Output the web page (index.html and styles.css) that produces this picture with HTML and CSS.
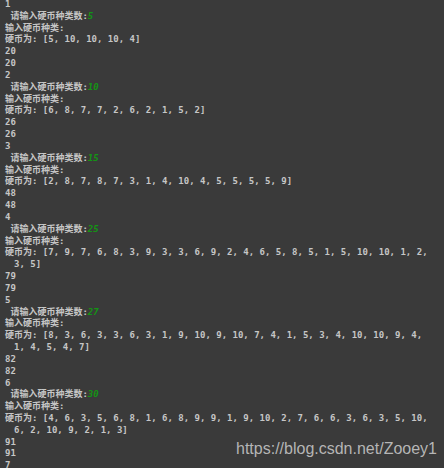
FILE: index.html
```html
<!DOCTYPE html>
<html lang="zh">
<head>
<meta charset="utf-8">
<title>Console</title>
<link rel="stylesheet" href="styles.css">
</head>
<body>
<div class="console">
<div class="line">1</div>
<div class="line"> 请输入硬币种类数:<span class="in">5</span></div>
<div class="line">输入硬币种类:</div>
<div class="line">硬币为: [5, 10, 10, 10, 4]</div>
<div class="line">20</div>
<div class="line">20</div>
<div class="line">2</div>
<div class="line"> 请输入硬币种类数:<span class="in">10</span></div>
<div class="line">输入硬币种类:</div>
<div class="line">硬币为: [6, 8, 7, 7, 2, 6, 2, 1, 5, 2]</div>
<div class="line">26</div>
<div class="line">26</div>
<div class="line">3</div>
<div class="line"> 请输入硬币种类数:<span class="in">15</span></div>
<div class="line">输入硬币种类:</div>
<div class="line">硬币为: [2, 8, 7, 8, 7, 3, 1, 4, 10, 4, 5, 5, 5, 5, 9]</div>
<div class="line">48</div>
<div class="line">48</div>
<div class="line">4</div>
<div class="line"> 请输入硬币种类数:<span class="in">25</span></div>
<div class="line">输入硬币种类:</div>
<div class="line">硬币为: [7, 9, 7, 6, 8, 3, 9, 3, 3, 6, 9, 2, 4, 6, 5, 8, 5, 1, 5, 10, 10, 1, 2,</div>
<div class="line cont">3, 5]</div>
<div class="line">79</div>
<div class="line">79</div>
<div class="line">5</div>
<div class="line"> 请输入硬币种类数:<span class="in">27</span></div>
<div class="line">输入硬币种类:</div>
<div class="line">硬币为: [8, 3, 6, 3, 3, 6, 3, 1, 9, 10, 9, 10, 7, 4, 1, 5, 3, 4, 10, 10, 9, 4,</div>
<div class="line cont">1, 4, 5, 4, 7]</div>
<div class="line">82</div>
<div class="line">82</div>
<div class="line">6</div>
<div class="line"> 请输入硬币种类数:<span class="in">30</span></div>
<div class="line">输入硬币种类:</div>
<div class="line">硬币为: [4, 6, 3, 5, 6, 8, 1, 6, 8, 9, 9, 1, 9, 10, 2, 7, 6, 6, 3, 6, 3, 5, 10,</div>
<div class="line cont">6, 2, 10, 9, 2, 1, 3]</div>
<div class="line">91</div>
<div class="line">91</div>
<div class="line">7</div>
</div>
<div class="watermark">https://blog.csdn.net/Zooey1</div>
</body>
</html>
```

FILE: styles.css
```css
html, body {
  margin: 0;
  padding: 0;
  background: #3a3a3a;
  height: 100%;
  overflow: hidden;
}

.console {
  padding: 0 0 0 5px;
  margin-top: -1px;
  font-family: "DejaVu Sans Mono", "Noto Sans CJK SC", monospace;
  font-size: 9px;
  font-weight: bold;
  line-height: 11.84px;
  color: #c6c6c6;
}

.line {
  white-space: pre;
  height: 11.84px;
}

.cont {
  padding-left: 9px;
}

.in {
  color: #149414;
  font-style: italic;
}

.watermark {
  position: absolute;
  left: 236px;
  top: 439px;
  font-family: "Liberation Sans", Arial, sans-serif;
  font-size: 16px;
  line-height: 20px;
  color: rgba(205, 205, 205, 0.85);
}
```
